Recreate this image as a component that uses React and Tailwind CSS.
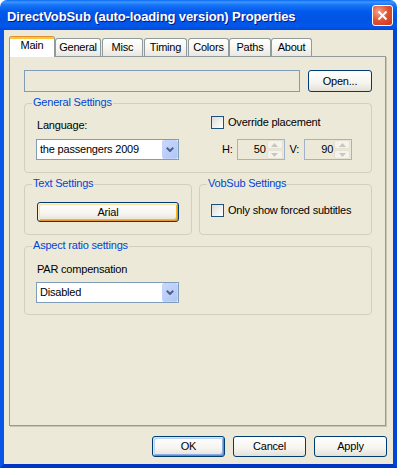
import React from "react";

const TABS = [
  { label: "Main", w: "w-[46px]", ml: "ml-0", active: true },
  { label: "General", w: "w-[46px]", ml: "ml-0" },
  { label: "Misc", w: "w-[41px]", ml: "ml-[1px]" },
  { label: "Timing", w: "w-[43px]", ml: "ml-[1px]" },
  { label: "Colors", w: "w-[41px]", ml: "ml-[1px]" },
  { label: "Paths", w: "w-[42px]", ml: "ml-0" },
  { label: "About", w: "w-[41px]", ml: "ml-0" },
];

const BTN =
  "flex items-center justify-center leading-[13px] rounded-[3px] border border-[#003C74] bg-[linear-gradient(to_bottom,#FFFFFF_0%,#F5F4EF_60%,#E3E1D6_100%)]";

function Tab({ tab }) {
  if (tab.active) {
    return (
      <div
        className={`${tab.w} ${tab.ml} relative z-10 h-[21px] -mb-px flex justify-center pt-[3px] leading-[13px] rounded-t-[3px] border-x border-[#919B9C] bg-[linear-gradient(to_bottom,#E68B2C_0px,#E68B2C_1px,#FFC73C_1px,#FFC73C_3px,#FFFFFF_3px)]`}
      >
        {tab.label}
      </div>
    );
  }
  return (
    <div
      className={`${tab.w} ${tab.ml} h-[18px] flex items-center justify-center leading-[13px] rounded-t-[3px] border border-b-0 border-[#919B9C] bg-[linear-gradient(to_bottom,#FFFFFF_0%,#F6F5F1_55%,#E9E7DF_100%)]`}
    >
      {tab.label}
    </div>
  );
}

function Group({ label, className, children }) {
  return (
    <div className={`relative border border-[#D0D0BF] rounded-[4px] ${className}`}>
      <span className="absolute top-[-8px] left-[7px] px-px leading-[13px] bg-[#ECE9D8] text-[#0046D5]">
        {label}
      </span>
      {children}
    </div>
  );
}

function Chevron() {
  return (
    <svg width="8" height="5" viewBox="0 0 8 5">
      <polyline points="0.8,0.8 4,4 7.2,0.8" fill="none" stroke="#4D6185" strokeWidth="2" />
    </svg>
  );
}

function Combo({ value, className }) {
  return (
    <div
      className={`w-[143px] h-[21px] border border-[#7F9DB9] bg-white flex items-center justify-between pl-[3px] ${className}`}
    >
      <span className="leading-[13px]">{value}</span>
      <div className="w-[16px] h-[19px] rounded-[2px] border border-[#C3D3FD] bg-[linear-gradient(135deg,#C8D8FC,#B1C6F6)] flex items-center justify-center">
        <Chevron />
      </div>
    </div>
  );
}

function Spin({ value, className }) {
  return (
    <div
      className={`w-[48px] h-[21px] border border-[#A0B3CB] bg-[#ECE9D8] flex items-center justify-end pr-px ${className}`}
    >
      <span className="leading-[13px] mr-px">{value}</span>
      <div className="w-[16px] h-[19px] flex flex-col gap-px">
        <div className="flex-1 rounded-[2px] border border-[#E5E2D4] bg-[#F4F3EE] flex items-center justify-center">
          <svg width="7" height="4" viewBox="0 0 7 4">
            <polygon points="0,4 3.5,0 7,4" fill="#C9C7BA" />
          </svg>
        </div>
        <div className="flex-1 rounded-[2px] border border-[#E5E2D4] bg-[#F4F3EE] flex items-center justify-center">
          <svg width="7" height="4" viewBox="0 0 7 4">
            <polygon points="0,0 3.5,4 7,0" fill="#C9C7BA" />
          </svg>
        </div>
      </div>
    </div>
  );
}

function Check({ label }) {
  return (
    <div className="flex items-center h-[13px]">
      <div className="w-[13px] h-[13px] border border-[#1C5180] bg-[linear-gradient(135deg,#DCDCD7,#FFFFFF)]" />
      <span className="ml-[4px] leading-[13px] whitespace-nowrap">{label}</span>
    </div>
  );
}

export default function App() {
  return (
    <div className="w-[397px] h-[468px] bg-white font-['Liberation_Sans',Arial,sans-serif] text-[11px] tracking-[-0.2px] text-black">
      <div className="h-[468px] flex flex-col rounded-t-[7px] overflow-hidden">
        {/* Title bar */}
        <div className="h-[30px] shrink-0 flex items-center justify-between pl-[7px] pr-[4px] bg-[linear-gradient(to_bottom,#0A6AF5_0px,#3C95FF_2px,#1675F8_5px,#0058EC_12px,#0054E3_20px,#0058EA_26px,#0049D9_30px)]">
          <span className="mt-[3px] text-[13px] leading-[16px] font-bold tracking-[-0.1px] text-white whitespace-nowrap [text-shadow:1px_1px_0_#0A1883]">
            DirectVobSub (auto-loading version) Properties
          </span>
          <div className="w-[21px] h-[21px] rounded-[3px] border border-white bg-[radial-gradient(circle_at_30%_30%,#F4A28C_0%,#E1512F_50%,#C5391A_100%)] flex items-center justify-center">
            <svg width="11" height="11" viewBox="0 0 11 11">
              <line x1="1.5" y1="1.5" x2="9.5" y2="9.5" stroke="white" strokeWidth="2" />
              <line x1="9.5" y1="1.5" x2="1.5" y2="9.5" stroke="white" strokeWidth="2" />
            </svg>
          </div>
        </div>

        {/* Body */}
        <div className="flex-1 flex flex-col bg-[#ECE9D8] border-l-4 border-r-4 border-b-4 border-l-[#0855E8] border-r-[#0047D6] border-b-[#0034C2]">
          {/* Tabs */}
          <div className="flex items-end ml-[5px] mt-[6px] h-[20px]">
            {TABS.map((t) => (
              <Tab key={t.label} tab={t} />
            ))}
          </div>

          {/* Tab page */}
          <div className="ml-[5px] w-[377px] h-[370px] border border-[#919B9C] shadow-[1px_1px_0_#C9C6B6] bg-[#ECE9D8] pl-[14px] pt-[13px]">
            <div className="flex gap-[8px]">
              <div className="w-[276px] h-[22px] border border-[#7F9DB9] bg-[#ECE9D8]" />
              <button className={`${BTN} w-[64px] h-[22px]`}>Open...</button>
            </div>

            <Group label="General Settings" className="mt-[11px] w-[348px] h-[70px]">
              <div className="flex pl-[11px] pt-[12px]">
                <div className="w-[143px] pt-[3px]">
                  <div className="leading-[13px] pl-px">Language:</div>
                  <Combo className="mt-[7px]" value="the passengers 2009" />
                </div>
                <div className="ml-[32px]">
                  <Check label="Override placement" />
                  <div className="flex items-center mt-[10px] ml-[11px]">
                    <span className="leading-[13px]">H:</span>
                    <Spin className="ml-[4px]" value="50" />
                    <span className="ml-[5px] leading-[13px]">V:</span>
                    <Spin className="ml-[5px]" value="90" />
                  </div>
                </div>
              </div>
            </Group>

            <div className="flex mt-[11px] gap-[7px]">
              <Group label="Text Settings" className="w-[168px] h-[51px]">
                <div className="pl-[12px] pt-[17px]">
                  <button
                    className={`${BTN} w-[142px] h-[20px] shadow-[inset_1px_1px_0_#FFF0CF,inset_-1px_-1px_0_#E5972A,inset_2px_2px_0_#FCE0A8,inset_-2px_-2px_0_#F8B330]`}
                  >
                    Arial
                  </button>
                </div>
              </Group>
              <Group label="VobSub Settings" className="w-[173px] h-[51px]">
                <div className="pl-[11px] pt-[19px]">
                  <Check label="Only show forced subtitles" />
                </div>
              </Group>
            </div>

            <Group label="Aspect ratio settings" className="mt-[11px] w-[348px] h-[69px]">
              <div className="pl-[11px] pt-[16px]">
                <div className="leading-[13px] pl-px">PAR compensation</div>
                <Combo className="mt-[6px]" value="Disabled" />
              </div>
            </Group>
          </div>

          {/* Dialog buttons */}
          <div className="flex justify-end gap-[8px] pr-[6px] mt-[10px]">
            <button
              className={`${BTN} w-[73px] h-[21px] shadow-[inset_1px_1px_0_#CEE7FF,inset_-1px_-1px_0_#6982EE,inset_2px_2px_0_#BCD4F6,inset_-2px_-2px_0_#89ADE4]`}
            >
              OK
            </button>
            <button className={`${BTN} w-[73px] h-[21px]`}>Cancel</button>
            <button className={`${BTN} w-[73px] h-[21px]`}>Apply</button>
          </div>
        </div>
      </div>
    </div>
  );
}
